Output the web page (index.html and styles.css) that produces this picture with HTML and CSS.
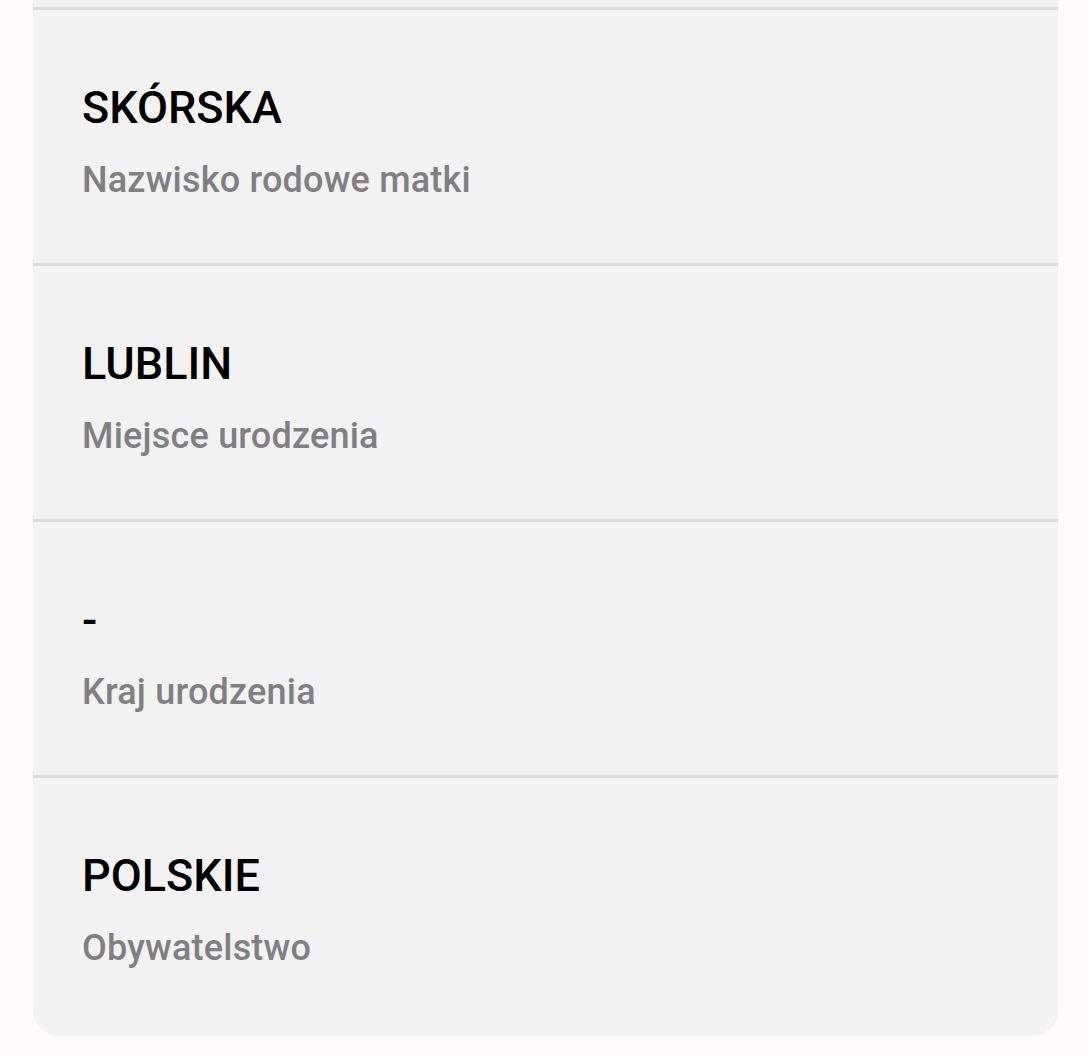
FILE: index.html
```html
<!DOCTYPE html>
<html lang="pl">
<head>
<meta charset="utf-8">
<link rel="stylesheet" href="styles.css">
</head>
<body>
<div class="page">
  <div class="card">
    <div class="stub"></div>
    <div class="row">
      <div class="value">SKÓRSKA</div>
      <div class="label">Nazwisko rodowe matki</div>
    </div>
    <div class="row">
      <div class="value">LUBLIN</div>
      <div class="label">Miejsce urodzenia</div>
    </div>
    <div class="row">
      <div class="value">-</div>
      <div class="label">Kraj urodzenia</div>
    </div>
    <div class="row last">
      <div class="value">POLSKIE</div>
      <div class="label">Obywatelstwo</div>
    </div>
  </div>
</div>
</body>
</html>
```
FILE: styles.css
```css
html, body {
  margin: 0;
  padding: 0;
  background: #fdfbfb;
}
.page {
  padding: 0 30px 0 33px;
  height: 1056px;
  box-sizing: border-box;
  overflow: hidden;
}
.card {
  background: #f3f2f3;
  border-radius: 0 0 26px 26px;
  display: flex;
  flex-direction: column;
  font-family: Roboto, "Noto Sans", sans-serif;
}
.stub {
  height: 7px;
  border-bottom: 3px solid #dcdbdc;
}
.row {
  height: 256px;
  box-sizing: border-box;
  padding: 71px 0 0 49px;
  border-bottom: 3px solid #dcdbdc;
  display: flex;
  flex-direction: column;
  gap: 24px;
}
.row.last {
  border-bottom: none;
  height: 258px;
}
.value {
  font-size: 45px;
  font-weight: 500;
  line-height: 54px;
  color: #000;
}
.label {
  font-size: 36px;
  font-weight: 500;
  line-height: 42px;
  letter-spacing: 0.2px;
  color: #808082;
}
```
